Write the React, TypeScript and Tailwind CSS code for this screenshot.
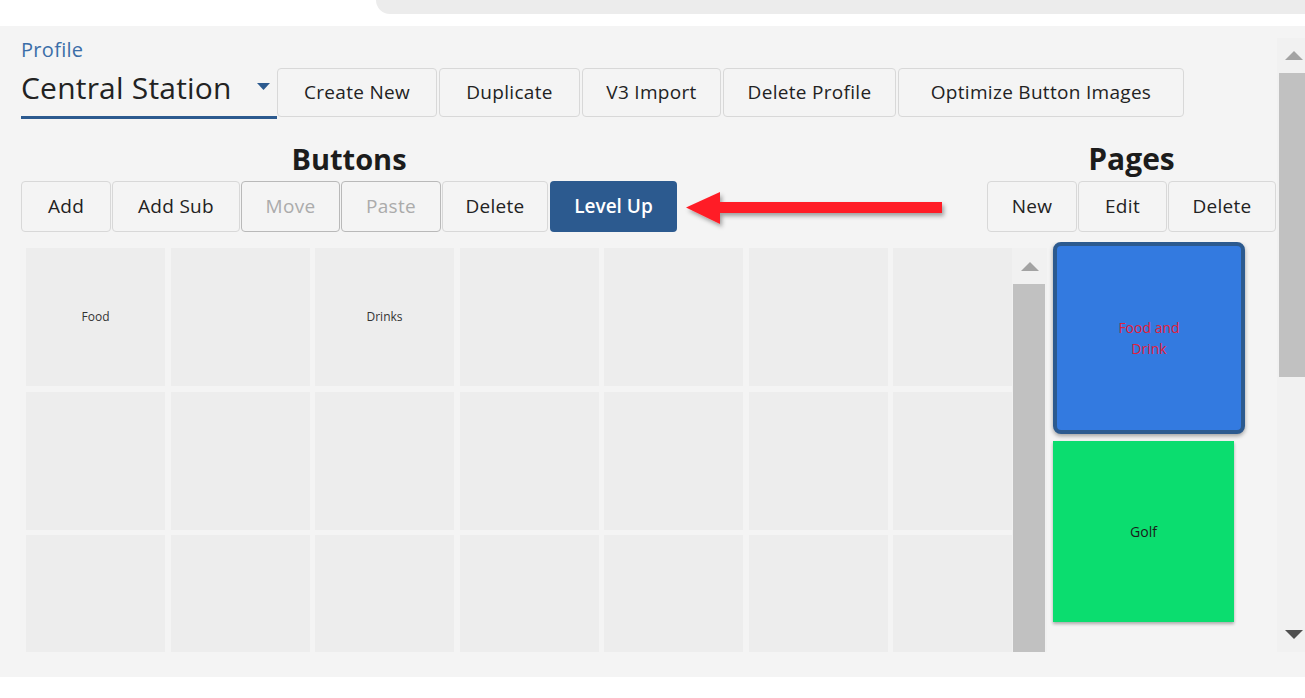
import React from 'react';

const topActions = [
  { label: 'Create New', w: 'w-[160px]' },
  { label: 'Duplicate', w: 'w-[141px]' },
  { label: 'V3 Import', w: 'w-[139px]' },
  { label: 'Delete Profile', w: 'w-[173px]' },
  { label: 'Optimize Button Images', w: 'w-[286px]' },
];

const buttonActions = [
  { label: 'Add', w: 'w-[90px]' },
  { label: 'Add Sub', w: 'w-[128px]' },
  { label: 'Move', w: 'w-[99px]', disabled: true },
  { label: 'Paste', w: 'w-[100px]', disabled: true },
  { label: 'Delete', w: 'w-[106px]' },
];

const pageActions = [
  { label: 'New', w: 'w-[90px]' },
  { label: 'Edit', w: 'w-[89px]' },
  { label: 'Delete', w: 'w-[108px]' },
];

// 7 columns x 4 rows, only a few have labels
const cells: string[] = Array.from({ length: 28 }, (_, i) => (i === 0 ? 'Food' : i === 2 ? 'Drinks' : ''));

function ActionButton({ label, w, disabled, h = 'h-[51px]' }: { label: string; w: string; disabled?: boolean; h?: string }) {
  return (
    <button
      className={`${w} ${h} shrink-0 rounded-[4px] border bg-[#f4f4f4] text-[19px] tracking-[0.3px] ${
        disabled ? 'border-[#b9b9b9] text-[#ababab]' : 'border-[#d8d8d8] text-[#222]'
      }`}
    >
      {label}
    </button>
  );
}

function UpArrow() {
  return (
    <svg width="18" height="9" viewBox="0 0 18 9">
      <path d="M9 0 L18 9 L0 9 Z" fill="#a3a3a3" />
    </svg>
  );
}

export default function App() {
  return (
    <div className="relative w-[1305px] h-[698px] overflow-hidden bg-white font-['Open_Sans',sans-serif]">
      {/* top search bar edge */}
      <div className="h-[26px] flex">
        <div className="ml-[376px] flex-1 h-[14px] bg-[#ececec] rounded-bl-[16px]" />
      </div>

      <div className="h-[651px] bg-[#f4f4f4] flex">
        <main className="flex-1 pl-[21px] pr-[1px] pt-[14px]">
          {/* Profile row */}
          <div className="flex items-end">
            <div className="w-[256px] flex flex-col">
              <span className="text-[20px] leading-[20px] text-[#3b6ea8] tracking-[0.3px]">Profile</span>
              <div className="h-[59px] flex items-center justify-between pr-[7px] border-b-[3px] border-[#2c5a8f]">
                <span className="text-[30px] leading-[40px] text-[#222] tracking-[0.2px]">Central Station</span>
                <svg width="13" height="7" viewBox="0 0 13 7" className="mt-[-3px]">
                  <path d="M0 0 L13 0 L6.5 7 Z" fill="#2c5a8f" />
                </svg>
              </div>
            </div>
            <div className="flex gap-[2px] mb-[2px]">
              {topActions.map((a) => (
                <ActionButton key={a.label} label={a.label} w={a.w} h="h-[49px]" />
              ))}
            </div>
          </div>

          {/* Headings + toolbars */}
          <div className="mt-[17px] flex justify-between">
            <div className="flex flex-col">
              <h2 className="text-center text-[29px] leading-[45px] font-bold text-[#1c1c1c]">Buttons</h2>
              <div className="flex gap-[1px]">
                {buttonActions.map((a) => (
                  <ActionButton key={a.label} label={a.label} w={a.w} disabled={a.disabled} />
                ))}
                <button className="ml-[1px] w-[127px] h-[51px] rounded-[4px] bg-[#2c5a8f] text-white text-[19px] font-semibold">
                  Level Up
                </button>
              </div>
            </div>
            <div className="flex flex-col">
              <h2 className="text-center text-[30px] leading-[45px] font-bold text-[#1c1c1c]">Pages</h2>
              <div className="flex gap-[1px]">
                {pageActions.map((a) => (
                  <ActionButton key={a.label} label={a.label} w={a.w} />
                ))}
              </div>
            </div>
          </div>

          {/* Button grid + pages */}
          <div className="mt-[10px] h-[410px] flex">
            <div className="ml-[5px] pt-[6px] flex">
              <div className="w-[986px] h-[404px] overflow-hidden">
                <div className="grid grid-cols-[repeat(7,139px)] auto-rows-[138px] gap-x-[5.5px] gap-y-[5.5px]">
                  {cells.map((c, i) => (
                    <div key={i} className="bg-[#ededed] flex items-center justify-center text-[12px] text-[#333]">
                      {c}
                    </div>
                  ))}
                </div>
              </div>
              <div className="w-[35px] h-[404px] bg-[#f1f1f1] flex flex-col">
                <div className="h-[36px] flex items-center justify-center">
                  <UpArrow />
                </div>
                <div className="ml-[1px] w-[32px] flex-1 bg-[#c1c1c1]" />
              </div>
            </div>
            <div className="flex-1 pl-[6px] flex flex-col gap-[7px] overflow-hidden">
              <div className="w-[192px] h-[192px] shrink-0 rounded-[8px] border-[4px] border-[#2c5a8f] bg-[#337ae0] shadow-[0_2px_4px_rgba(0,0,0,0.35)] flex items-center justify-center text-center text-[14px] leading-[21px] text-[#e2203a]">
                <span>
                  Food and
                  <br />
                  Drink
                </span>
              </div>
              <div className="w-[181px] h-[181px] shrink-0 bg-[#0bdd6f] shadow-[0_2px_3px_rgba(0,0,0,0.3)] flex items-center justify-center text-[14px] text-[#1b1b1b]">
                Golf
              </div>
            </div>
          </div>
        </main>

        {/* page scrollbar */}
        <div className="mt-[12px] w-[28px] h-[614px] bg-[#f1f1f1] flex flex-col">
          <div className="h-[35px] flex items-center justify-center pl-[6px]">
            <UpArrow />
          </div>
          <div className="ml-[2px] h-[304px] bg-[#c1c1c1]" />
          <div className="flex-1 flex items-end justify-center pl-[6px] pb-[13px]">
            <svg width="18" height="9" viewBox="0 0 18 9">
              <path d="M0 0 L18 0 L9 9 Z" fill="#505050" />
            </svg>
          </div>
        </div>
      </div>

      {/* red annotation arrow */}
      <svg className="absolute left-[684px] top-[188px]" width="266" height="46" viewBox="0 0 266 46">
        <defs>
          <filter id="arrowShadow" x="-10%" y="-30%" width="120%" height="170%">
            <feDropShadow dx="2" dy="3" stdDeviation="2" floodColor="#000" floodOpacity="0.35" />
          </filter>
        </defs>
        <path d="M2 19.5 L36 4 L36 14 L258 14 L258 25 L36 25 L36 36 Z" fill="#ff1f27" filter="url(#arrowShadow)" />
      </svg>
    </div>
  );
}
